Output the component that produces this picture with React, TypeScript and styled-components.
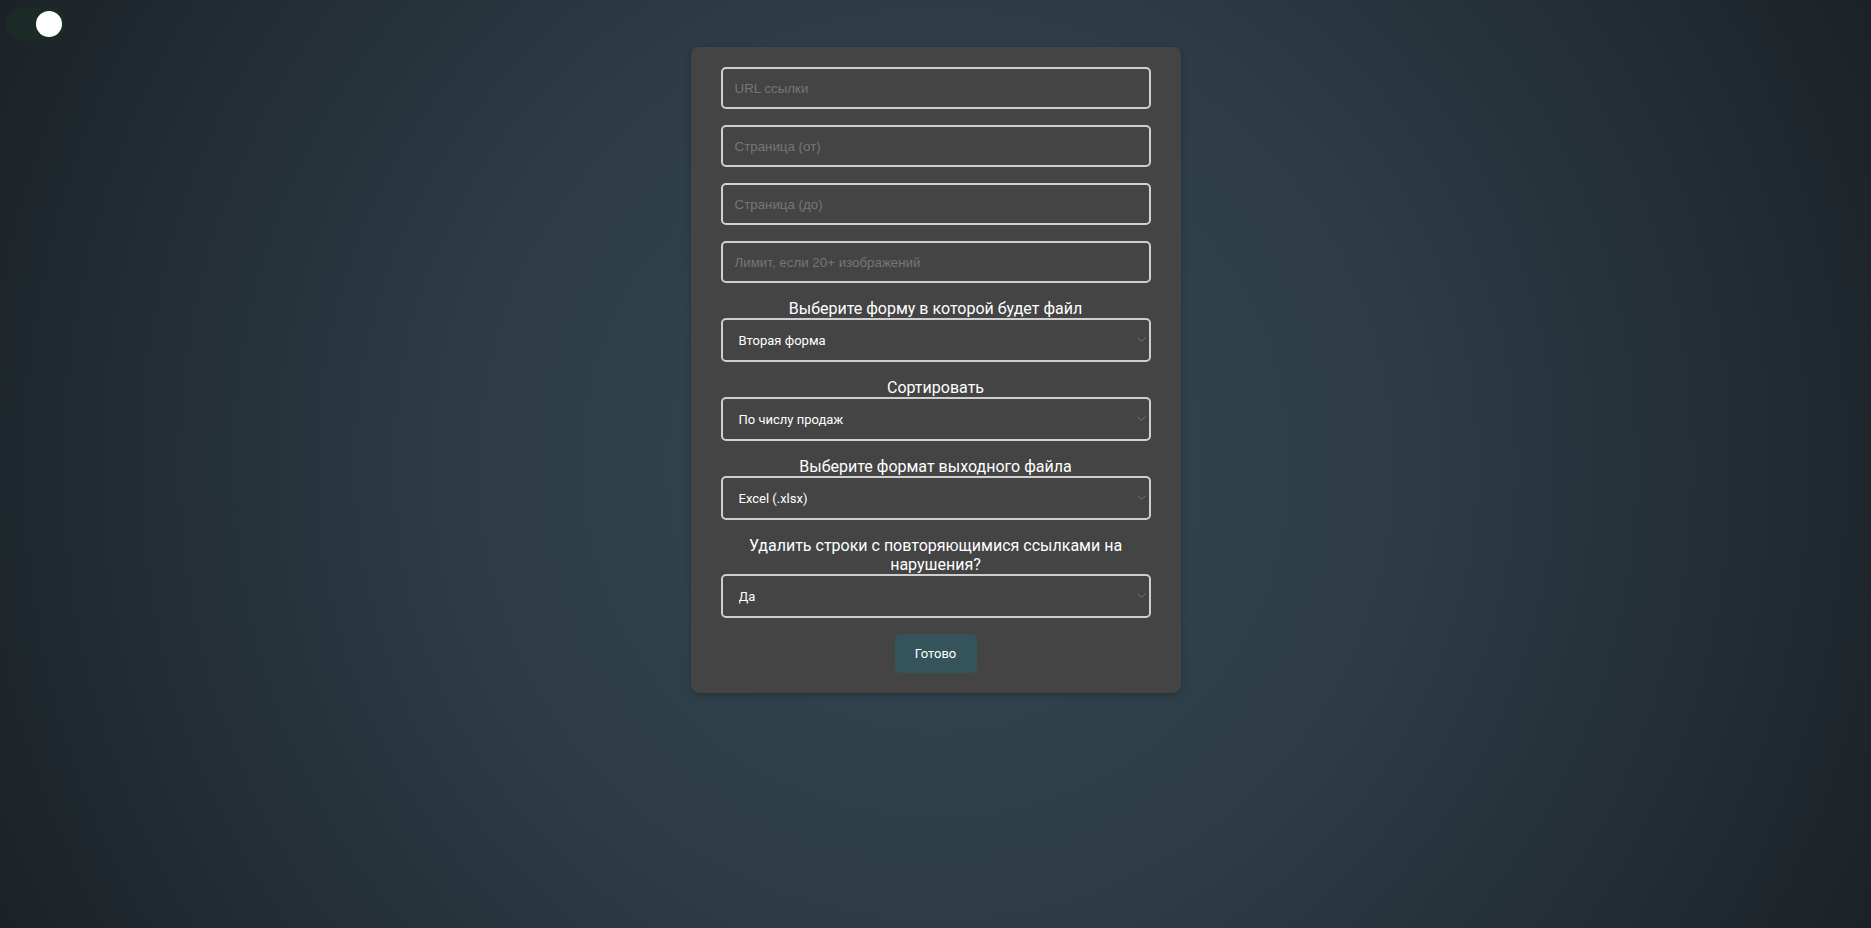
import React, { useState } from "react";
import styled, { createGlobalStyle } from "styled-components";

const GlobalStyle = createGlobalStyle`
  html, body {
    margin: 0;
    padding: 0;
    min-height: 100%;
  }
  body {
    min-height: 928px;
    background: radial-gradient(circle at center, #354752 0%, #2d3c46 45%, #1b2227 100%);
    font-family: Roboto, "Liberation Sans", Arial, sans-serif;
  }
`;

const Page = styled.div`
  position: relative;
  min-height: 928px;
  display: flex;
  justify-content: center;
  align-items: flex-start;
  padding-top: 47px;
  box-sizing: border-box;
`;

const Switch = styled.label`
  position: absolute;
  top: 7px;
  left: 6px;
  width: 60px;
  height: 34px;
  display: inline-block;
  cursor: pointer;
`;

const SwitchInput = styled.input`
  opacity: 0;
  width: 0;
  height: 0;
  margin: 0;
`;

const SwitchTrack = styled.span<{ $on: boolean }>`
  position: absolute;
  inset: 0;
  border-radius: 17px;
  background: ${(p) => (p.$on ? "#1b2a27" : "#2a3138")};
  transition: background 0.2s;

  &::before {
    content: "";
    position: absolute;
    width: 26px;
    height: 26px;
    left: 4px;
    top: 4px;
    border-radius: 50%;
    background: #ffffff;
    transform: translateX(${(p) => (p.$on ? "26px" : "0")});
    transition: transform 0.2s;
  }
`;

const Card = styled.form`
  width: 490px;
  box-sizing: border-box;
  background: #444444;
  border-radius: 8px;
  padding: 20px 30px 20px;
  display: flex;
  flex-direction: column;
  align-items: stretch;
  box-shadow: 0 2px 6px rgba(0, 0, 0, 0.25);
`;

const TextInput = styled.input`
  box-sizing: border-box;
  width: 100%;
  height: 42px;
  margin: 0 0 16px;
  padding: 0 12px;
  border: 2px solid #cfcfcf;
  border-radius: 5px;
  background: transparent;
  color: #ffffff;
  font-family: "Liberation Sans", Arial, sans-serif;
  font-size: 13.33px;
  outline: none;

  &::placeholder {
    color: #72777c;
  }
`;

const Group = styled.div`
  display: flex;
  flex-direction: column;
  margin-bottom: 16px;
`;

const Label = styled.label`
  display: block;
  color: #ffffff;
  font-family: Roboto, "Liberation Sans", sans-serif;
  font-size: 16px;
  line-height: 19px;
  text-align: center;
  padding: 0 10px;
`;

const SelectWrap = styled.div`
  position: relative;
`;

const Select = styled.select`
  box-sizing: border-box;
  width: 100%;
  height: 44px;
  margin: 0;
  padding: 0 30px 0 16px;
  border: 2px solid #cfcfcf;
  border-radius: 5px;
  background: #444444;
  color: #ffffff;
  font-family: Roboto, "Liberation Sans", sans-serif;
  font-size: 13px;
  font-weight: 400;
  appearance: none;
  -webkit-appearance: none;
  outline: none;
  cursor: pointer;
`;

const Chevron = styled.svg`
  position: absolute;
  right: 5px;
  top: 50%;
  margin-top: -3px;
  width: 9px;
  height: 5px;
  pointer-events: none;
`;

const ButtonRow = styled.div`
  display: flex;
  justify-content: center;
`;

const Submit = styled.button`
  width: 82px;
  height: 39px;
  border: none;
  border-radius: 5px;
  background: #35535a;
  color: #ffffff;
  font-family: Roboto, "Liberation Sans", sans-serif;
  font-size: 13px;
  font-weight: 400;
  cursor: pointer;
`;

type SelectField = {
  id: string;
  label: string;
  options: string[];
};

const selects: SelectField[] = [
  { id: "form", label: "Выберите форму в которой будет файл", options: ["Вторая форма", "Первая форма"] },
  { id: "sort", label: "Сортировать", options: ["По числу продаж", "По цене", "По рейтингу"] },
  { id: "format", label: "Выберите формат выходного файла", options: ["Excel (.xlsx)", "CSV (.csv)"] },
  {
    id: "dedupe",
    label: "Удалить строки с повторяющимися ссылками на нарушения?",
    options: ["Да", "Нет"],
  },
];

const inputs = ["URL ссылки", "Страница (от)", "Страница (до)", "Лимит, если 20+ изображений"];

export default function App() {
  const [dark, setDark] = useState(true);
  return (
    <>
      <GlobalStyle />
      <Page>
        <Switch>
          <SwitchInput type="checkbox" checked={dark} onChange={() => setDark(!dark)} />
          <SwitchTrack $on={dark} />
        </Switch>
        <Card onSubmit={(e) => e.preventDefault()}>
          {inputs.map((ph) => (
            <TextInput key={ph} type="text" placeholder={ph} />
          ))}
          {selects.map((s) => (
            <Group key={s.id}>
              <Label htmlFor={s.id}>{s.label}</Label>
              <SelectWrap>
                <Select id={s.id} defaultValue={s.options[0]}>
                  {s.options.map((o) => (
                    <option key={o}>{o}</option>
                  ))}
                </Select>
                <Chevron viewBox="0 0 9 5">
                  <path d="M0.5 0.5 L4.5 4.5 L8.5 0.5" fill="none" stroke="#6e6e6e" strokeWidth="1" />
                </Chevron>
              </SelectWrap>
            </Group>
          ))}
          <ButtonRow>
            <Submit type="submit">Готово</Submit>
          </ButtonRow>
        </Card>
      </Page>
    </>
  );
}
